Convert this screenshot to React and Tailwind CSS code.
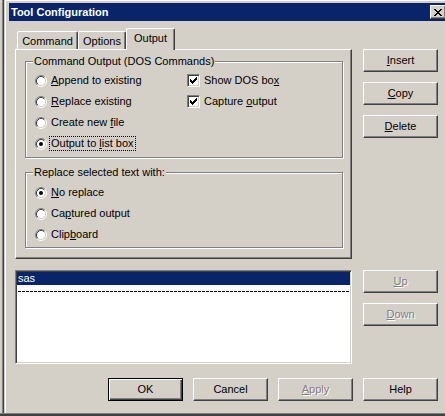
import React from "react";

const CLOSE_X = ["XX....XX", ".XX..XX.", "..XXXX..", "...XX...", "..XXXX..", ".XX..XX.", "XX....XX"];
const CHECK = ["......X", ".....XX", "X...XXX", "XX.XXX.", "XXXXX..", ".XXX...", "..X...."];

function Pix({ rows }) {
  return rows.flatMap((r, y) =>
    [...r].map((c, x) =>
      c === "X" ? <rect key={`${x}-${y}`} x={x} y={y} width="1" height="1" fill="#000" /> : null
    )
  );
}

function Radio({ checked }) {
  return (
    <svg width="12" height="12" viewBox="0 0 12 12" className="shrink-0">
      <circle cx="6" cy="6" r="4.5" fill="#fff" />
      <path d="M2.11 9.89A5.5 5.5 0 0 1 9.89 2.11" stroke="#808080" fill="none" />
      <path d="M9.89 2.11A5.5 5.5 0 0 1 2.11 9.89" stroke="#fff" fill="none" />
      <path d="M2.82 9.18A4.5 4.5 0 0 1 9.18 2.82" stroke="#404040" fill="none" />
      <path d="M9.18 2.82A4.5 4.5 0 0 1 2.82 9.18" stroke="#d4d0c8" fill="none" />
      {checked && <circle cx="6" cy="6" r="2" fill="#000" />}
    </svg>
  );
}

function Check() {
  return (
    <div className="w-[13px] h-[13px] shrink-0 bg-white border border-t-[#808080] border-l-[#808080] border-r-white border-b-white shadow-[inset_1px_1px_0_#404040,inset_-1px_-1px_0_#d4d0c8] flex items-center justify-center">
      <svg width="7" height="7" viewBox="0 0 7 7" shapeRendering="crispEdges">
        <Pix rows={CHECK} />
      </svg>
    </div>
  );
}

function Option({ control, children, focus }) {
  return (
    <div className="flex items-center h-[21px] gap-[3px]">
      {control}
      <span className={`px-px leading-[13px] ${focus ? "outline-1 outline-dotted outline-black" : ""}`}>{children}</span>
    </div>
  );
}

function Button({ children, disabled, isDefault }) {
  const edge = isDefault
    ? "border border-black shadow-[inset_1px_1px_0_#fff,inset_-1px_-1px_0_#404040,inset_-2px_-2px_0_#808080]"
    : "border border-t-white border-l-white border-r-[#404040] border-b-[#404040] shadow-[inset_-1px_-1px_0_#808080]";
  return (
    <div
      className={`w-[75px] h-[23px] shrink-0 flex items-center justify-center ${edge} ${
        disabled ? "text-[#808080] [text-shadow:1px_1px_0_#fff]" : "text-black"
      }`}
    >
      {children}
    </div>
  );
}

function Group({ title, className, children }) {
  return (
    <div className={`relative border border-[#808080] shadow-[inset_1px_1px_0_#fff,1px_1px_0_#fff] ${className}`}>
      <span className="absolute left-[7px] -top-[8px] px-px bg-[#d4d0c8] leading-[14px]">{title}</span>
      {children}
    </div>
  );
}

function Tab({ children, selected }) {
  return (
    <div
      className={`flex items-center justify-center border-t border-l border-r border-t-white border-l-white border-r-[#404040] shadow-[inset_-1px_0_0_#808080] rounded-t-[2px] bg-[#d4d0c8] ${
        selected ? "h-[22px] -mb-px relative z-10 w-[49px] pb-[3px]" : "h-[18px] pt-px"
      }`}
    >
      {children}
    </div>
  );
}

export default function App() {
  return (
    <div className="w-[445px] h-[416px] overflow-hidden bg-[#d4d0c8] flex flex-col font-['Liberation_Sans',Arial,sans-serif] text-[11px] text-black">
      <div className="flex h-[413px]">
        <div className="w-[2px]" />
        <div className="w-px bg-[#808080]" />
        <div className="w-px bg-[#404040]" />
        <div className="w-px" />
        <div className="w-px bg-white" />
        <div className="flex-1 flex flex-col border-t border-white pt-[2px]">
          {/* title bar */}
          <div className="ml-[3px] h-[18px] bg-[#0a246a] flex items-center justify-between">
            <span className="pl-[2px] text-white font-bold text-[11px] leading-[14px]">Tool Configuration</span>
            <div className="w-[16px] h-[14px] -mr-px shrink-0 border border-t-white border-l-white border-r-[#404040] border-b-[#404040] shadow-[inset_-1px_-1px_0_#808080] bg-[#d4d0c8] flex items-center justify-center">
              <svg width="8" height="7" viewBox="0 0 8 7" shapeRendering="crispEdges" className="-ml-px">
                <Pix rows={CLOSE_X} />
              </svg>
            </div>
          </div>

          {/* body */}
          <div className="pl-[9px] pr-[7px] pt-[7px] flex flex-col">
            <div className="flex">
              <div className="w-[337px] flex flex-col">
                <div className="flex items-end pl-[2px] h-[21px]">
                  <Tab>
                    <span className="w-[59px] text-center">Command</span>
                  </Tab>
                  <Tab>
                    <span className="w-[46px] text-center">Options</span>
                  </Tab>
                  <Tab selected>Output</Tab>
                </div>
                <div className="h-[210px] border border-t-white border-l-white border-r-[#404040] border-b-[#404040] shadow-[inset_-1px_-1px_0_#808080] pt-[11px] pl-[9px] pr-[8px] flex flex-col">
                  <Group title="Command Output (DOS Commands)" className="h-[97px] pt-[8px] pl-[9px] flex">
                    <div className="w-[152px] flex flex-col">
                      <Option control={<Radio />}>
                        <u>A</u>ppend to existing
                      </Option>
                      <Option control={<Radio />}>
                        <u>R</u>eplace existing
                      </Option>
                      <Option control={<Radio />}>
                        Create new <u>f</u>ile
                      </Option>
                      <Option control={<Radio checked />} focus>
                        Output to <u>l</u>ist box
                      </Option>
                    </div>
                    <div className="flex flex-col">
                      <Option control={<Check />}>
                        Show DOS bo<u>x</u>
                      </Option>
                      <Option control={<Check />}>
                        Capture <u>o</u>utput
                      </Option>
                    </div>
                  </Group>
                  <Group title="Replace selected text with:" className="mt-[14px] h-[76px] pt-[9px] pl-[9px] flex flex-col">
                    <Option control={<Radio checked />}>
                      <u>N</u>o replace
                    </Option>
                    <Option control={<Radio />}>
                      Ca<u>p</u>tured output
                    </Option>
                    <Option control={<Radio />}>
                      Clip<u>b</u>oard
                    </Option>
                  </Group>
                </div>
              </div>
              <div className="ml-[11px] pt-[21px] flex flex-col gap-[10px]">
                <Button>
                  <u>I</u>nsert
                </Button>
                <Button>
                  <u>C</u>opy
                </Button>
                <Button>
                  <u>D</u>elete
                </Button>
              </div>
            </div>

            <div className="flex mt-[11px]">
              <div className="w-[337px] h-[94px] bg-white border border-t-[#808080] border-l-[#808080] border-r-white border-b-white shadow-[inset_1px_1px_0_#404040,inset_-1px_-1px_0_#d4d0c8] p-[1px] flex flex-col">
                <div className="h-[13px] bg-[#0a246a] text-white pl-[1px] leading-[13px]">sas</div>
                <div className="h-[13px] flex items-center px-px">
                  <div className="h-px w-full bg-[repeating-linear-gradient(90deg,#000_0_3px,transparent_3px_4px)]" />
                </div>
              </div>
              <div className="ml-[11px] flex flex-col gap-[10px]">
                <Button disabled>
                  <u>U</u>p
                </Button>
                <Button disabled>
                  <u>D</u>own
                </Button>
              </div>
            </div>

            <div className="flex justify-end gap-[10px] mt-[14px]">
              <Button isDefault>OK</Button>
              <Button>Cancel</Button>
              <Button disabled>
                <u>A</u>pply
              </Button>
              <Button>Help</Button>
            </div>
          </div>
        </div>
      </div>
      <div className="h-px bg-[#808080]" />
      <div className="h-[2px] bg-[#404040]" />
    </div>
  );
}
